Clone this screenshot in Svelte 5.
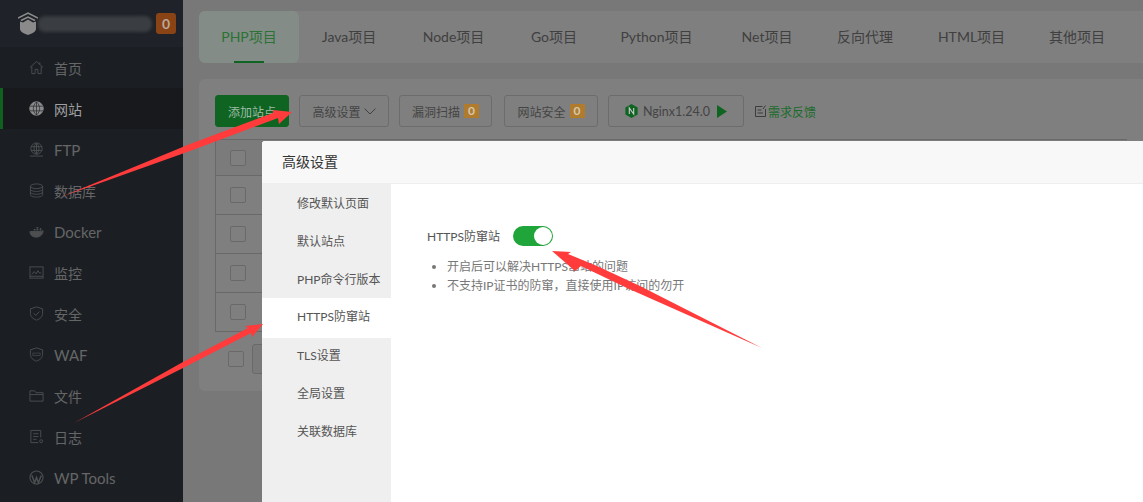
<script>
  const menu = [
    { name: "首页", icon: "home" },
    { name: "网站", icon: "globe", active: true },
    { name: "FTP", icon: "ftp", latin: true },
    { name: "数据库", icon: "db" },
    { name: "Docker", icon: "docker", latin: true },
    { name: "监控", icon: "monitor" },
    { name: "安全", icon: "safe" },
    { name: "WAF", icon: "waf", latin: true },
    { name: "文件", icon: "folder" },
    { name: "日志", icon: "log" },
    { name: "WP Tools", icon: "wp", latin: true }
  ];
  const tabs = [
    { name: "PHP项目", width: 100 },
    { name: "Java项目", width: 100 },
    { name: "Node项目", width: 109 },
    { name: "Go项目", width: 92 },
    { name: "Python项目", width: 113 },
    { name: "Net项目", width: 108 },
    { name: "反向代理", width: 88 },
    { name: "HTML项目", width: 125 },
    { name: "其他项目", width: 86 }
  ];
  const settings = ["修改默认页面", "默认站点", "PHP命令行版本", "HTTPS防窜站", "TLS设置", "全局设置", "关联数据库"];
  const rows = [0, 1, 2, 3, 4];
</script>

<div class="page">
  <aside class="sidebar">
    <div class="brand">
      <svg class="logo" viewBox="0 0 20 23" width="20" height="23">
        <path d="M0 6 L10 1 L20 6 M3 8.5 L10 5 L17 8.5" fill="none" stroke="#8e8e8e" stroke-width="1.4" />
        <path d="M2 9.5 L5 10.5 L10 7.5 L15 10.5 L18 9.5 V17 C18 20 13 22 10 23 C7 22 2 20 2 17 Z" fill="#8a8a8a" />
      </svg>
      <div class="blur"></div>
      <span class="count">0</span>
    </div>
    <nav>
      {#each menu as item}
        <div class="item" class:active={item.active} class:latin={item.latin}>
          <svg class="icon" viewBox="0 0 16 16" width="15" height="15" fill="none" stroke="currentColor" stroke-width="1">
            {#if item.icon === "home"}
              <path d="M1 8 L8 1.5 L15 8 M3 7 V14.5 H6.5 V10 H9.5 V14.5 H13 V7 M11.5 2.5 V5" />
            {:else if item.icon === "globe"}
              <circle cx="8" cy="8" r="7.2" fill="currentColor" />
              <path d="M1 5.5 H15 M1 10.5 H15 M8 1 V15 M8 1 C3.5 5 3.5 11 8 15 M8 1 C12.5 5 12.5 11 8 15" stroke="#2a2c32" stroke-width=".8" />
            {:else if item.icon === "ftp"}
              <circle cx="8" cy="7" r="6" />
              <path d="M2 5 H14 M2 9 H14 M8 1 V13 M8 1 C4.5 4 4.5 10 8 13 M8 1 C11.5 4 11.5 10 8 13 M1 15 H15" />
            {:else if item.icon === "db"}
              <ellipse cx="8" cy="3.5" rx="6.5" ry="2.5" />
              <path d="M1.5 3.5 V12.5 C1.5 14 4.5 15 8 15 C11.5 15 14.5 14 14.5 12.5 V3.5 M1.5 6.5 C1.5 8 4.5 9 8 9 C11.5 9 14.5 8 14.5 6.5 M1.5 9.5 C1.5 11 4.5 12 8 12 C11.5 12 14.5 11 14.5 9.5" />
            {:else if item.icon === "docker"}
              <path d="M1 8 H12 C13 8 14 7.5 15 7 C15 11 12 14 8 14 C4 14 1 12 1 8 Z" fill="currentColor" />
              <path d="M5 6 H7 M8 6 H10 M8 4 H10 M12 7 L12.5 4.5" stroke-width="1.6" />
            {:else if item.icon === "monitor"}
              <rect x="1" y="2" width="14" height="12" />
              <path d="M3 10 L5.5 7 L7.5 9.5 L9.5 6 L11 8.5 H13 M1 12 H15" />
            {:else if item.icon === "safe"}
              <path d="M8 1 L14.5 3 V8 C14.5 11.5 11.5 14 8 15 C4.5 14 1.5 11.5 1.5 8 V3 Z" />
              <path d="M5 8 L7.2 10 L11 6" />
            {:else if item.icon === "waf"}
              <path d="M8 1 L14.5 3 V8 C14.5 11.5 11.5 14 8 15 C4.5 14 1.5 11.5 1.5 8 V3 Z" />
              <path d="M4 6.5 H12 V9 H4 Z" stroke-width=".7" />
            {:else if item.icon === "folder"}
              <path d="M1 3 H6 L7.5 5 H15 V14 H1 Z M1 7 H15" />
            {:else if item.icon === "log"}
              <path d="M12.5 9 V1.5 H2 V14.5 H10 M4.5 5 H10 M4.5 8 H10 M4.5 11 H8" />
              <circle cx="13" cy="13" r="1.6" />
            {:else if item.icon === "wp"}
              <circle cx="8" cy="8" r="7" stroke-width="1.2" />
              <path d="M3 5.5 L6 13.5 L8 8 L10 13.5 L13 6" stroke-width="1.6" />
            {/if}
          </svg>
          <span>{item.name}</span>
        </div>
      {/each}
    </nav>
  </aside>

  <main class="main">
    <div class="tabs">
      {#each tabs as tab, i}
        <div class="tab" class:on={i === 0} style="width: {tab.width}px">{tab.name}</div>
      {/each}
    </div>

    <section class="panel">
      <div class="toolbar">
        <button class="btn primary">添加站点</button>
        <button class="btn adv">
          高级设置
          <svg viewBox="0 0 12 7" width="12" height="7" fill="none" stroke="#404040" stroke-width="1"><path d="M.5 .5 L6 6 L11.5 .5" /></svg>
        </button>
        <button class="btn scan">漏洞扫描 <b class="num">0</b></button>
        <button class="btn scan second">网站安全 <b class="num">0</b></button>
        <button class="btn nginx">
          <svg viewBox="0 0 14 16" width="13" height="14"><path d="M7 0 L14 4 V12 L7 16 L0 12 V4 Z" fill="#0f6422" /><path d="M4.5 11.5 V4.5 L9.5 11.5 V4.5" fill="none" stroke="#c8c8c8" stroke-width="1.3" /></svg>
          <span>Nginx1.24.0</span>
          <svg class="play" viewBox="0 0 10 13" width="10" height="13"><path d="M0 0 L10 6.5 L0 13 Z" fill="#0f6422" /></svg>
        </button>
        <a class="feedback" href="#top">
          <svg viewBox="0 0 11 12" width="11" height="12" fill="none" stroke="#3c3c3c" stroke-width="1"><path d="M7.5 1.5 H.5 V11.5 H10.5 V4 M2.5 5 H6.5 M2.5 8 H8 M8 4 L10.5 .5" /></svg>
          <span>需求反馈</span>
        </a>
      </div>
      <div class="table">
        {#each rows as row}
          <div class="row" class:first={row === 0}><i class="check"></i></div>
        {/each}
      </div>
      <div class="foot">
        <i class="check"></i>
        <div class="select"></div>
      </div>
    </section>
  </main>

  <div class="dialog">
    <header>高级设置</header>
    <div class="body">
      <ul class="side">
        {#each settings as s, i}
          <li class:cur={i === 3}>{s}</li>
        {/each}
      </ul>
      <div class="content">
        <div class="line">
          <span>HTTPS防窜站</span>
          <div class="switch"><i></i></div>
        </div>
        <ul class="tips">
          <li>开启后可以解决HTTPS窜站的问题</li>
          <li>不支持IP证书的防窜，直接使用IP访问的勿开</li>
        </ul>
      </div>
    </div>
  </div>

  <svg class="arrows" viewBox="0 0 1143 502" width="1143" height="502">
    <path d="M61 197 L190 144 L273 113 L273 110 L292 112 L279 124 L278 118 L190 151 Z" />
    <path d="M74 423 L183 362 L248 328 L245 326 L263 324 L252 337 L251 333 L183 368 Z" />
    <path d="M552 251 L571 252 L568 254 L597 266 L640 286 L762 348 L627 288 L581 266 L575 271 Z" />
  </svg>
</div>

<style>
  :global(body) {
    margin: 0;
    overflow: hidden;
  }
  .page {
    position: relative;
    display: flex;
    width: 1143px;
    height: 502px;
    overflow: hidden;
    background: #787878;
    font-family: Lato, "Noto Sans CJK SC", sans-serif;
    font-size: 14px;
  }
  .sidebar {
    width: 183px;
    flex: none;
    background: #1b1f24;
    color: #666;
  }
  .brand {
    display: flex;
    align-items: center;
    height: 47px;
    padding-left: 18px;
    box-sizing: border-box;
    background: #1f2329;
  }
  .logo {
    flex: none;
  }
  .blur {
    width: 114px;
    height: 16px;
    border-radius: 7px;
    background: #3a3d41;
    filter: blur(1.5px);
  }
  .count {
    width: 20px;
    height: 21px;
    margin-left: 4px;
    border-radius: 3px;
    background: #8a4315;
    color: #b8a89a;
    font-weight: 700;
    font-size: 14px;
    line-height: 21px;
    text-align: center;
  }
  .item {
    display: flex;
    align-items: center;
    gap: 10px;
    height: 41px;
    padding-left: 29px;
    font-size: 14px;
  }
  .item.latin {
    font-size: 15px;
  }
  .item .icon {
    flex: none;
    color: #4c4e50;
  }
  .item.active {
    padding-left: 26px;
    border-left: 3px solid #10601f;
    background: #17191d;
    color: #a0a0a0;
  }
  .item.active .icon {
    color: #8c8c8c;
  }
  .main {
    flex: 1;
    min-width: 0;
    padding: 11px 0 0 16px;
  }
  .tabs {
    display: flex;
    height: 52px;
    background: #7f7f7f;
    border-radius: 6px 0 0 6px;
  }
  .tab {
    position: relative;
    flex: none;
    line-height: 51px;
    text-align: center;
    color: #404040;
    white-space: nowrap;
  }
  .tab.on {
    background: #838c86;
    border-radius: 6px;
    color: #2a7335;
  }
  .tab.on::after {
    content: "";
    position: absolute;
    left: 35px;
    bottom: 0;
    width: 30px;
    height: 2px;
    background: #0f6422;
  }
  .panel {
    margin-top: 16px;
    height: 312px;
    padding: 16px;
    box-sizing: border-box;
    background: #7f7f7f;
    border-radius: 6px 0 0 6px;
  }
  .toolbar {
    display: flex;
    align-items: center;
    height: 32px;
  }
  .btn {
    display: flex;
    align-items: center;
    justify-content: center;
    height: 32px;
    margin-right: 10px;
    padding: 0;
    border: 1px solid #6c6c6c;
    border-radius: 3px;
    background: #7f7f7f;
    color: #444;
    font: inherit;
    font-size: 12px;
    white-space: nowrap;
  }
  .primary {
    width: 74px;
    border-color: #0f6422;
    background: #0f6422;
    color: #9dbba5;
  }
  .adv {
    width: 90px;
    gap: 3px;
  }
  .scan {
    width: 93px;
    margin-right: 12px;
    gap: 4px;
  }
  .scan.second {
    width: 94px;
    margin-right: 10px;
  }
  .nginx {
    width: 136px;
    gap: 5px;
    font-size: 12.5px;
  }
  .play {
    margin-left: 2px;
  }
  .num {
    width: 15px;
    height: 14px;
    line-height: 14px;
    background: #b17b2d;
    color: #d3c8ae;
    font-size: 12px;
    text-align: center;
  }
  .feedback {
    display: flex;
    align-items: center;
    gap: 2px;
    margin-left: 1px;
    color: #1c6b2c;
    font-size: 12px;
    text-decoration: none;
  }
  .table {
    margin-top: 12px;
    border: solid #696969;
    border-width: 1px 0 1px 1px;
  }
  .row {
    display: flex;
    align-items: center;
    height: 38px;
    padding-left: 14px;
    border-top: 1px solid #696969;
  }
  .row.first {
    height: 35px;
    border-top: 0;
    background: #7b7b7b;
  }
  .check {
    display: block;
    width: 14px;
    height: 14px;
    border: 1px solid #696969;
    border-radius: 2px;
    background: #7f7f7f;
  }
  .foot {
    display: flex;
    align-items: center;
    gap: 8px;
    padding: 12px 0 0 13px;
  }
  .select {
    width: 60px;
    height: 28px;
    border: 1px solid #696969;
    border-radius: 3px;
    background: #797979;
  }
  .dialog {
    position: absolute;
    left: 262px;
    top: 141px;
    right: 0;
    bottom: 0;
    background: #fff;
    border-radius: 3px 0 0 0;
    overflow: hidden;
  }
  .dialog header {
    height: 43px;
    padding-left: 20px;
    line-height: 42px;
    box-sizing: border-box;
    background: #f8f8f8;
    border-bottom: 1px solid #eee;
    color: #333;
    font-size: 14px;
  }
  .body {
    display: flex;
    height: 318px;
  }
  .side {
    flex: none;
    width: 129px;
    margin: 0;
    padding: 1px 0 0;
    list-style: none;
    background: #efefef;
  }
  .side li {
    height: 38px;
    padding-left: 35px;
    line-height: 38px;
    color: #555;
    font-size: 12px;
    white-space: nowrap;
  }
  .side li.cur {
    height: 40px;
    margin: -1px 0 -1px;
    background: #fff;
  }
  .content {
    padding: 42px 0 0 36px;
    color: #666;
    font-size: 12px;
  }
  .line {
    display: flex;
    align-items: center;
    gap: 13px;
    height: 20px;
    color: #555;
  }
  .line span {
    margin-top: -2px;
  }
  .switch {
    position: relative;
    width: 40px;
    height: 20px;
    border-radius: 10px;
    background: #20a53a;
  }
  .switch i {
    position: absolute;
    right: 1px;
    top: 1px;
    width: 18px;
    height: 18px;
    border-radius: 50%;
    background: #fff;
  }
  .tips {
    margin: 11px 0 0;
    padding-left: 20px;
    color: #777;
  }
  .tips li {
    height: 19px;
    line-height: 19px;
  }
  .arrows {
    position: absolute;
    left: 0;
    top: 0;
    fill: #ff3b3b;
    pointer-events: none;
  }
</style>
